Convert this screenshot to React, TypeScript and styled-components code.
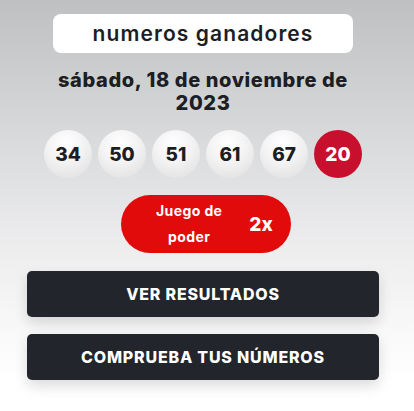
import React from 'react'
import styled, { createGlobalStyle } from 'styled-components'

const GlobalStyle = createGlobalStyle`
  html, body {
    margin: 0;
    padding: 0;
    background: #ffffff;
  }
  body {
    font-family: Inter, 'Liberation Sans', sans-serif;
    color: #1c1e23;
  }
`

const numbers = [34, 50, 51, 61, 67]
const powerball = 20

export default function App() {
  return (
    <>
      <GlobalStyle />
      <Page>
        <TitlePill>numeros ganadores</TitlePill>
        <DrawDate>
          sábado, 18 de noviembre de
          <br />
          2023
        </DrawDate>
        <BallRow>
          {numbers.map((n) => (
            <Ball key={n}>{n}</Ball>
          ))}
          <Ball red>{powerball}</Ball>
        </BallRow>
        <PowerPlay>
          <PowerLabel>
            Juego de
            <br />
            poder
          </PowerLabel>
          <PowerValue>2x</PowerValue>
        </PowerPlay>
        <Actions>
          <ActionButton>VER RESULTADOS</ActionButton>
          <ActionButton>COMPRUEBA TUS NÚMEROS</ActionButton>
        </Actions>
      </Page>
    </>
  )
}

const Page = styled.div`
  display: flex;
  flex-direction: column;
  align-items: center;
  min-height: 411px;
  box-sizing: border-box;
  padding: 14px 8px 0 0;
  background: linear-gradient(180deg, #bfc0c2 0px, #d9dadc 140px, #efeff0 260px, #ffffff 380px);
`

const TitlePill = styled.div`
  display: flex;
  align-items: center;
  justify-content: center;
  width: 300px;
  height: 39px;
  background: #ffffff;
  border-radius: 8px;
  font-size: 21px;
  font-weight: 600;
  letter-spacing: 1.1px;
  color: #1c1e23;
`

const DrawDate = styled.div`
  margin-top: 16px;
  text-align: center;
  font-size: 20px;
  font-weight: 800;
  line-height: 23px;
  letter-spacing: 0.6px;
  color: #1c1e23;
`

const BallRow = styled.div`
  display: flex;
  gap: 6px;
  margin-top: 15px;
`

const Ball = styled.div<{ red?: boolean }>`
  display: flex;
  align-items: center;
  justify-content: center;
  width: 48px;
  height: 48px;
  border-radius: 50%;
  font-size: 19px;
  font-weight: 800;
  color: ${(p) => (p.red ? '#ffffff' : '#1c1e23')};
  background: ${(p) =>
    p.red
      ? '#c8102e'
      : 'radial-gradient(circle at 45% 30%, #ffffff 0%, #f4f4f4 40%, #dcdcdc 100%)'};
`

const PowerPlay = styled.div`
  display: flex;
  align-items: center;
  gap: 27px;
  box-sizing: border-box;
  width: 170px;
  height: 58px;
  padding-left: 35px;
  margin: 17px 0 0 6px;
  border-radius: 29px;
  background: #e10b0b;
  color: #ffffff;
`

const PowerLabel = styled.div`
  text-align: center;
  font-size: 14px;
  font-weight: 700;
  line-height: 26px;
  letter-spacing: 0.4px;
`

const PowerValue = styled.div`
  font-size: 19px;
  font-weight: 800;
`

const Actions = styled.div`
  display: flex;
  flex-direction: column;
  gap: 17px;
  margin-top: 18px;
`

const ActionButton = styled.button`
  display: flex;
  align-items: center;
  justify-content: center;
  width: 352px;
  height: 46px;
  padding: 0;
  border: 0;
  border-radius: 5px;
  background: #22252b;
  color: #ffffff;
  font-family: Inter, 'Liberation Sans', sans-serif;
  font-size: 16px;
  font-weight: 800;
  letter-spacing: 0.8px;
  box-shadow: 0 6px 14px rgba(0, 0, 0, 0.14);
  cursor: pointer;
`
